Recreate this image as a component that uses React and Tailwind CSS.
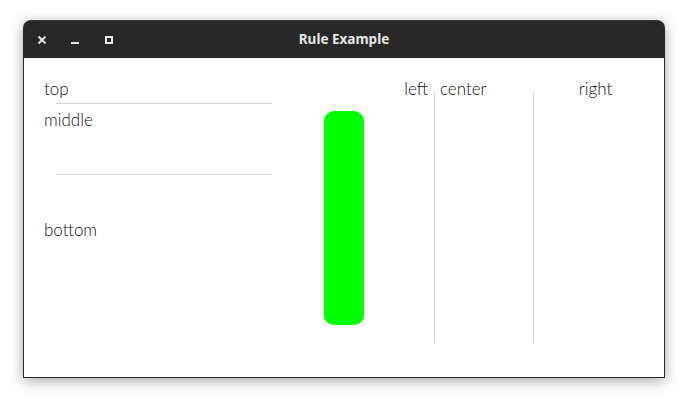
import React from 'react';

const font = { fontFamily: 'Lato, "Noto Sans", sans-serif' };

const TitleBar = () => (
  <div className="relative h-[38px] shrink-0 bg-[#282828] rounded-t-[8px] border-t border-[#3a3a3a] flex items-center">
    <div className="flex items-center">
      <svg className="ml-[14px]" width="10" height="10" viewBox="0 0 10 10">
        <path d="M1.5 1.5 L8.5 8.5 M8.5 1.5 L1.5 8.5" stroke="#e8e8e8" strokeWidth="2" />
      </svg>
      <div className="ml-[24px] mt-[6px] w-[8px] h-[2px] bg-[#e8e8e8]"></div>
      <div className="ml-[26px] w-[8px] h-[8px] border-2 border-[#e8e8e8]"></div>
    </div>
    <div
      className="absolute inset-0 flex items-center justify-center text-[13.5px] font-bold text-[#e6e6e6]"
      style={{ fontFamily: '"Noto Sans", sans-serif' }}
    >
      Rule Example
    </div>
  </div>
);

const App = () => {
  return (
    <div className="w-[688px] h-[405px] bg-white pt-[20px] pl-[23px]">
      <div className="w-[642px] h-[358px] flex flex-col rounded-t-[8px] shadow-[0_3px_14px_rgba(0,0,0,0.35)]">
        <TitleBar />
        <div
          className="flex-1 flex bg-white border-x border-b border-[#2b2b2b] text-[17px] font-light leading-[18px] text-[#0f0f0f]"
          style={font}
        >
          {/* stacked labels with horizontal rules */}
          <div className="ml-[20px] w-[228px] pt-[22px] flex flex-col">
            <div>top</div>
            <div className="ml-[12px] mt-[5px] h-px bg-[#d3d3d3]"></div>
            <div className="mt-[7px]">middle</div>
            <div className="ml-[12px] mt-[45px] h-px bg-[#d3d3d3]"></div>
            <div className="mt-[46px]">bottom</div>
          </div>

          {/* green bar */}
          <div className="ml-[52px] pt-[53px]">
            <div className="w-[40px] h-[214px] rounded-[10px] bg-[#00ff00]"></div>
          </div>

          {/* columns with vertical rules */}
          <div className="pt-[22px] w-[64px] text-right">left</div>
          <div className="ml-[6px] mt-[34px] w-px h-[251px] bg-[#d3d3d3]"></div>
          <div className="ml-[5px] pt-[22px] w-[93px]">center</div>
          <div className="mt-[34px] w-px h-[251px] bg-[#d3d3d3]"></div>
          <div className="pt-[22px] w-[123px] text-center">right</div>
        </div>
      </div>
    </div>
  );
};

export default App;
